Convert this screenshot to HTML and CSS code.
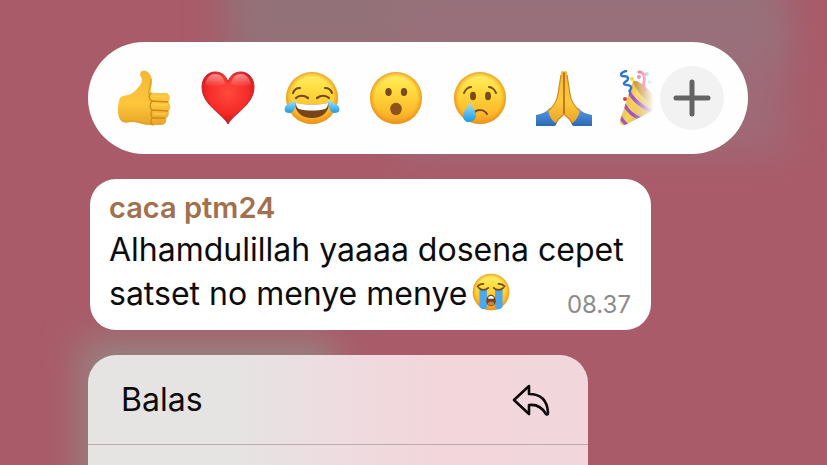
FILE: index.html
```
<!DOCTYPE html>
<html lang="id">
<head>
  <meta charset="UTF-8" />
  <meta name="viewport" content="width=device-width, initial-scale=1.0" />
  <title>Chat</title>
  <link rel="stylesheet" href="styles.css">
</head>
<body>
  <!-- shared emoji colours -->
  <svg class="defs" aria-hidden="true">
    <defs>
      <linearGradient id="face" x1="0" y1="0" x2="0" y2="1">
        <stop offset="0" stop-color="#fff06a" />
        <stop offset="0.35" stop-color="#ffdc3e" />
        <stop offset="0.75" stop-color="#fdbd2c" />
        <stop offset="1" stop-color="#f29a1f" />
      </linearGradient>
      <radialGradient id="rim">
        <stop offset="0.8" stop-color="#ee9a1c" stop-opacity="0" />
        <stop offset="1" stop-color="#e88f1a" stop-opacity="0.8" />
      </radialGradient>
      <linearGradient id="tear" x1="0" y1="0" x2="0" y2="1">
        <stop offset="0" stop-color="#a5e4fb" />
        <stop offset="1" stop-color="#189be0" />
      </linearGradient>
      <linearGradient id="skin" x1="0" y1="0" x2="0" y2="1">
        <stop offset="0" stop-color="#f3b836" />
        <stop offset="0.6" stop-color="#fdc73c" />
        <stop offset="1" stop-color="#e9a427" />
      </linearGradient>
      <radialGradient id="red" cx="0.5" cy="0.4" r="0.6">
        <stop offset="0" stop-color="#ff4a3d" />
        <stop offset="0.65" stop-color="#f52b28" />
        <stop offset="1" stop-color="#c9151f" />
      </radialGradient>
      <linearGradient id="shine" x1="0" y1="0" x2="0" y2="1">
        <stop offset="0" stop-color="#fff" stop-opacity="0.5" />
        <stop offset="1" stop-color="#fff" stop-opacity="0" />
      </linearGradient>
      <linearGradient id="sleeve" x1="0" y1="0" x2="0" y2="1">
        <stop offset="0" stop-color="#5b9ae2" />
        <stop offset="1" stop-color="#2b69b5" />
      </linearGradient>
      <linearGradient id="cone" x1="0" y1="0" x2="1" y2="0.4">
        <stop offset="0" stop-color="#dba528" />
        <stop offset="0.45" stop-color="#f6d45c" />
        <stop offset="1" stop-color="#c8972c" />
      </linearGradient>
      <clipPath id="coneClip"><path d="M13 11 L0 51 Q0 56 5 55 L40 37Z" /></clipPath>
    </defs>
  </svg>

  <div class="backdrop">
    <div class="blur blur-top"></div>
    <div class="blur blur-right"></div>
    <div class="blur blur-left"></div>
  </div>

  <main class="overlay">
    <div class="reaction-bar">
      <div class="reactions">
        <button class="reaction" aria-label="Jempol">
          <svg viewBox="0 0 56 56">
            <path fill="url(#skin)" d="M24 4 C24 1 27 0 30 1 C34 3 36 7 36 12 C36 16 34 20 35 23 L50 23 C54 23 55 30 52 32 C55 34 55 40 52 41 C54 43 52 48 50 48 C51 52 49 55 45 55 L34 55 C26 55 20 51 14 52 C8 54 4 51 3 47 C1 41 2 33 4 28 C6 25 11 26 15 24 C21 20 26 14 26 10 C26 8 24 6 24 4Z" />
            <path fill="none" stroke="#cf881d" stroke-width="1.3" stroke-linecap="round" d="M35 23 C32 25 33 30 36 31 M36 31 L52 32 M36 31 C33 34 34 39 36 40 M36 40 L52 41 M36 40 C34 43 35 47 37 48 M37 48 L49 48 M36 48 C34 51 35 54 37 55" />
            <path fill="none" stroke="#e5a329" stroke-width="1.5" d="M6 50 C9 53 13 51 17 51 C23 52 28 54 34 54 M35 9 C35 15 32 19 33 24" />
            <path fill="none" stroke="#ffd560" stroke-width="1.2" stroke-linecap="round" d="M37 26 L50 26 M38 35 L51 35 M38 44 L49 44" />
          </svg>
        </button>
        <button class="reaction" aria-label="Hati">
          <svg viewBox="0 0 56 56">
            <path fill="url(#red)" stroke="#c9222b" d="M28 54 C23 44 2 35 2 17 C2 8 8 2 15 2 C22 2 26 6 28 12 C30 6 34 2 41 2 C48 2 54 8 54 17 C54 35 33 44 28 54Z" />
            <path fill="url(#shine)" d="M5 15 C6 8 10 4 15 4 C21 4 24 8 25 14 C19 17 10 18 5 15Z M51 15 C50 8 46 4 41 4 C35 4 32 8 31 14 C37 17 46 18 51 15Z" />
          </svg>
        </button>
        <button class="reaction" aria-label="Tertawa">
          <svg viewBox="0 0 56 56">
            <circle cx="28" cy="28" r="26" fill="url(#face)" /><circle cx="28" cy="28" r="26" fill="url(#rim)" />
            <path fill="#76451a" d="M11 33 C22 35 35 35 45 33 C45 42 38 48 28 48 C18 48 11 42 11 33Z" />
            <path fill="#fff" d="M12 33 C22 35 35 35 44 33 C44 36 43 38 41 39 C33 41 23 41 15 39 C13 38 12 36 12 33Z" />
            <path fill="none" stroke="#74461a" stroke-width="2.2" stroke-linecap="round" d="M12 28 C15 25 20 25 24 28 M33 28 C37 25 42 25 45 28 M9 23 C10 20 13 18 16 18 M41 18 C44 18 47 20 48 23" />
            <path fill="url(#tear)" d="M12 30 C12 37 10 43 5 43 C1 43 0 40 1 37 C3 33 8 33 12 30Z M44 30 C44 37 46 43 51 43 C55 43 56 40 55 37 C53 33 48 33 44 30Z" />
          </svg>
        </button>
        <button class="reaction" aria-label="Kaget">
          <svg viewBox="0 0 56 56">
            <circle cx="28" cy="28" r="26" fill="url(#face)" /><circle cx="28" cy="28" r="26" fill="url(#rim)" />
            <g fill="#794b17"><ellipse cx="20.5" cy="22" rx="3.2" ry="4" /><ellipse cx="36" cy="22" rx="3.2" ry="4" /></g>
            <ellipse cx="28" cy="39" rx="5.8" ry="6.2" fill="#8d5419" />
          </svg>
        </button>
        <button class="reaction" aria-label="Sedih">
          <svg viewBox="0 0 56 56">
            <circle cx="28" cy="28" r="26" fill="url(#face)" /><circle cx="28" cy="28" r="26" fill="url(#rim)" />
            <g fill="#794b17"><ellipse cx="21" cy="26" rx="3" ry="4.3" /><ellipse cx="36" cy="26" rx="3" ry="4.3" /></g>
            <path fill="none" stroke="#794b17" stroke-width="2" stroke-linecap="round" d="M12 23 C13 20 16 17 19 17 M37 17 C40 17 43 20 44 23 M22 43 C25 39 32 39 35 44" />
            <path fill="url(#tear)" d="M18 32 C16 38 11 41 11 46 C11 50 14 52 17 52 C21 52 24 49 24 45 C24 41 20 38 18 32Z" />
          </svg>
        </button>
        <button class="reaction" aria-label="Terima kasih">
          <svg viewBox="0 0 56 56">
            <path fill="url(#sleeve)" d="M0 45 C6 44 10 42 14 38 L21 53 L19 56 L0 56Z M56 45 C50 44 46 42 42 38 L35 53 L37 56 L56 56Z" />
            <path fill="url(#skin)" d="M28 2 C27 0 25 1 25 3 L22 24 C21 32 17 37 12 41 C14 47 16 51 20 53 C22 48 26 47 28 44 C30 47 34 48 36 53 C40 51 42 47 44 41 C39 37 35 32 34 24 L31 3 C31 1 29 0 28 2Z" />
            <path fill="none" stroke="#a96517" stroke-width="1.5" stroke-linecap="round" d="M28 3 L28 44" />
            <path fill="none" stroke="#d18b20" stroke-width="1.2" d="M20 53 C22 48 26 47 28 44 C30 47 34 48 36 53 M25 5 L22 24 C21 32 17 37 12 41 M31 5 L34 24 C35 32 39 37 44 41" />
          </svg>
        </button>
        <button class="reaction" aria-label="Pesta">
          <svg viewBox="0 0 56 56">
            <path fill="url(#cone)" d="M13 11 L0 51 Q0 56 5 55 L40 37Z" />
            <path clip-path="url(#coneClip)" fill="none" stroke="#a052c8" stroke-width="3.4" d="M8 20 C12 29 24 40 36 42 M4 34 C8 42 15 47 22 49 M0 46 C2 50 5 54 9 56" />
            <path fill="#c79732" d="M13 11 C19 8 38 27 40 37 C32 37 15 22 13 11Z" />
            <path fill="none" stroke="#2e74d2" stroke-width="2.4" stroke-linecap="round" d="M6 1 C1 2 0 5 2 6 C4 7 7 5 8 8 C9 11 3 12 4 14 C6 16 10 14 11 17 C12 20 8 20 10 22" />
            <path fill="none" stroke="#f25786" stroke-width="3" stroke-linecap="round" d="M19 2 C25 2 25 8 24 12 C23 16 24 18 25 21" />
            <circle cx="12" cy="9" r="2" fill="#f5d733" /><circle cx="19" cy="7" r="2" fill="#ef6d92" />
            <circle cx="27" cy="4" r="2" fill="#5e9fe0" /><circle cx="30" cy="12" r="2" fill="#8dbbe8" />
            <circle cx="5" cy="29" r="2" fill="#e23d47" />
          </svg>
        </button>
      </div>
      <button class="more" aria-label="Reaksi lainnya">
        <svg viewBox="0 0 64 64"><path d="M32 16 V48 M16 32 H48" /></svg>
      </button>
    </div>

    <article class="bubble">
      <div class="sender">caca ptm24</div>
      <p class="message">Alhamdulillah yaaaa dosena cepet satset no menye menye<svg class="sob" viewBox="0 0 56 56" role="img" aria-label="Menangis">
          <circle cx="28" cy="28" r="27" fill="url(#face)" /><circle cx="28" cy="28" r="27" fill="url(#rim)" />
          <path fill="#4ba8eb" d="M11 24 H22 V50 C22 55 14 54 11 50Z M34 24 H45 V50 C42 54 34 55 34 50Z" />
          <path fill="none" stroke="#76491a" stroke-width="2.5" stroke-linecap="round" d="M10 22 C14 26 20 26 24 22 M32 22 C36 26 42 26 46 22 M8 20 C10 17 14 16 17 16 M39 16 C42 16 46 17 48 20" />
          <path fill="#75431b" d="M28 32 C32 32 35 36 35 41 C35 46 32 49 28 49 C24 49 21 46 21 41 C21 36 24 32 28 32Z" />
          <path fill="#fff" d="M24 36 C25 33 31 33 32 36 L32 38 H24Z" />
          <path fill="#c98345" d="M23 45 C25 41 31 41 33 45 C31 49 25 49 23 45Z" />
        </svg><time class="time" datetime="08:37">08.37</time></p>
    </article>

    <div class="menu">
      <button class="menu-item">
        <span>Balas</span>
        <svg class="reply" viewBox="0 0 40 36"><path d="M19 4 L4 18 L19 32 V23 C27 22 32 25 36 32 C38 33 38 32 38 30 C37 18 31 12 19 12 Z" /></svg>
      </button>
    </div>
  </main>
</body>
</html>
```
FILE: styles.css
```
* {
  box-sizing: border-box;
}
body {
  margin: 0;
  height: 100vh;
  position: relative;
  overflow: hidden;
  background-color: #a95b69;
  font-family: Inter, "Liberation Sans", sans-serif;
  color: #0b0b0b;
}
button {
  padding: 0;
  border: 0;
  background: none;
  font: inherit;
  color: inherit;
  cursor: pointer;
}
svg {
  display: block;
}
.defs {
  position: absolute;
  width: 0;
  height: 0;
}

/* chat bubbles out of focus behind the overlay */
.backdrop {
  position: absolute;
  inset: 0;
  overflow: hidden;
}
.blur {
  position: absolute;
  filter: blur(18px);
}
.blur-top {
  top: -40px;
  left: 225px;
  right: 45px;
  height: 105px;
  background-color: #937178;
}
.blur-right {
  top: 0;
  left: 400px;
  right: 40px;
  height: 155px;
  background-color: #9b707d;
  opacity: 0.7;
}
.blur-left {
  top: 340px;
  left: 80px;
  width: 255px;
  bottom: -40px;
  background-color: #968480;
}

.overlay {
  position: relative;
  display: flex;
  flex-direction: column;
  height: 100vh;
  padding: 42px 79px 0 88px;
}
.reaction-bar {
  display: flex;
  flex: none;
  align-items: center;
  gap: 6px;
  height: 112px;
  padding: 0 24px 0 28px;
  border-radius: 56px;
  background-color: #fefefe;
}
.reactions {
  display: flex;
  flex: 1;
  gap: 28px;
  min-width: 0;
  overflow: hidden;
  mask-image: linear-gradient(to right, #000 calc(100% - 20px), transparent);
}
.reaction {
  flex: none;
  width: 56px;
  height: 56px;
}
.more {
  flex: none;
  width: 64px;
  height: 64px;
  border-radius: 50%;
  background-color: #f2f2f2;
}
.more path {
  stroke: #646464;
  stroke-width: 5;
  stroke-linecap: round;
}

.bubble {
  flex: none;
  width: fit-content;
  max-width: 85%;
  margin: 25px 0 0 2px;
  padding: 8px 20px 13px 19px;
  border-radius: 26px;
  background-color: #fff;
}
.sender {
  color: #a2704e;
  font-size: 29px;
  font-weight: 600;
  line-height: 41px;
}
.message {
  margin: 0;
  font-size: 32px;
  line-height: 44px;
}
.sob {
  display: inline-block;
  width: 38px;
  height: 38px;
  margin-left: 5px;
  vertical-align: -6px;
}
/* sits on the last line of the message */
.time {
  float: right;
  margin-top: 21px;
  color: #8b8b8b;
  font-size: 24px;
  line-height: 24px;
}

.menu {
  flex: 1;
  width: 100%;
  min-height: 0;
  max-width: 500px;
  margin-top: 25px;
  overflow: hidden;
  border-radius: 28px 28px 0 0;
  background: linear-gradient(to right, #e5e4e2 28%, #eddde0 48%, #f3d6dc 70%, #f1d7dc);
}
.menu-item {
  display: flex;
  align-items: center;
  justify-content: space-between;
  width: 100%;
  height: 90px;
  padding: 0 38px 0 33px;
  border-bottom: 1px solid #bcabae;
  font-size: 32px;
}
.reply {
  width: 40px;
  height: 36px;
}
.reply path {
  fill: none;
  stroke: #0b0b0b;
  stroke-width: 2.6;
  stroke-linejoin: round;
}
```
